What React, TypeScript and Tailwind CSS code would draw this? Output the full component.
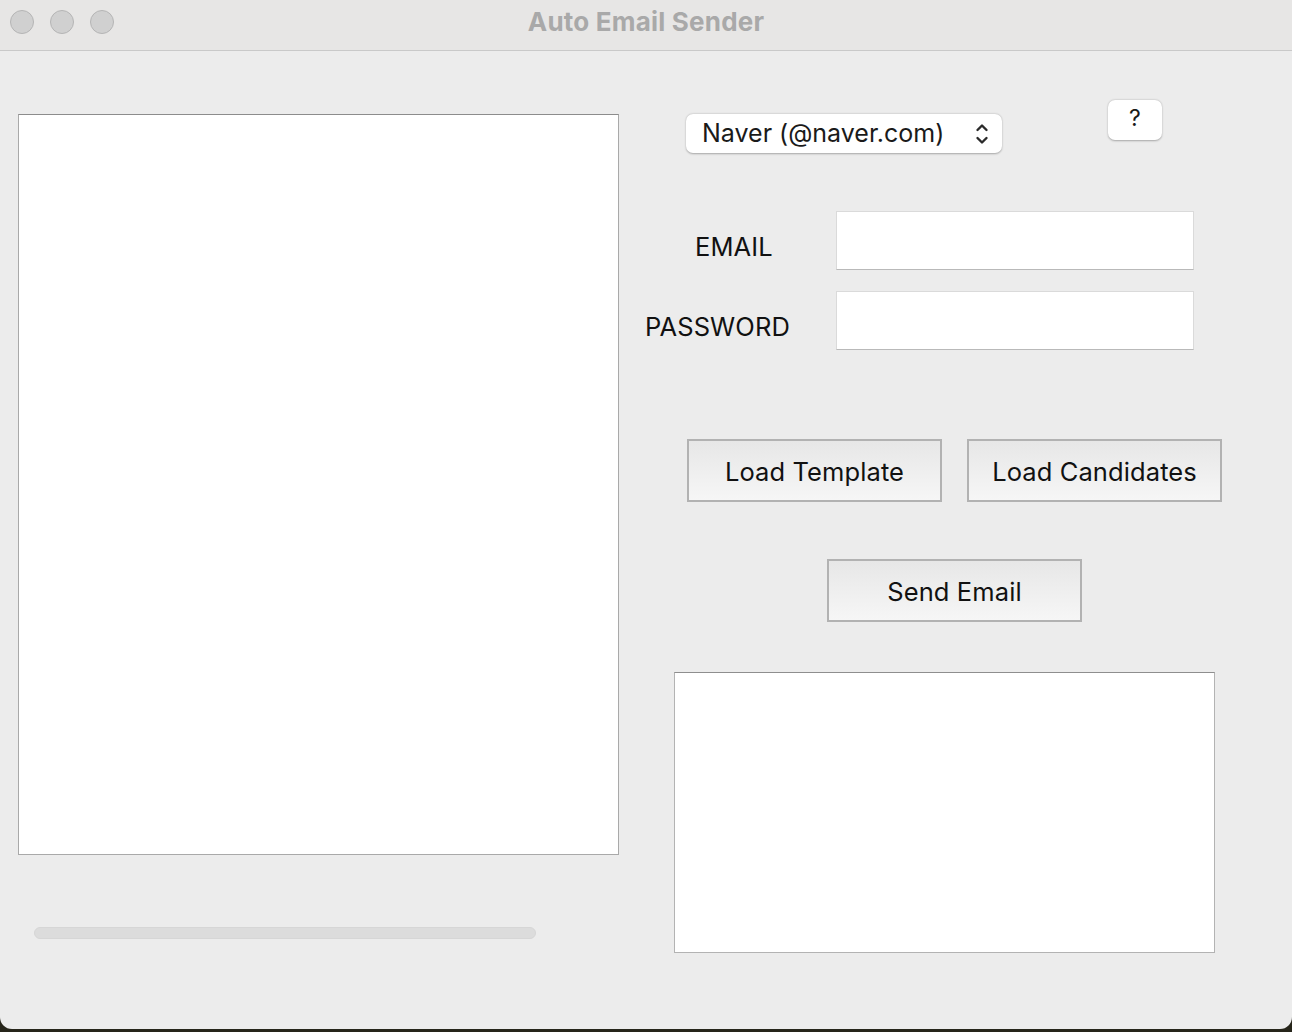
import React from "react";

function Chevrons() {
  return (
    <svg width="14" height="26" viewBox="0 0 14 26" fill="none" stroke="#2a2a2a" strokeWidth="2.4" strokeLinecap="round" strokeLinejoin="round">
      <path d="M2.5 9 L7 4.5 L11.5 9" />
      <path d="M2.5 17 L7 21.5 L11.5 17" />
    </svg>
  );
}

function Btn({ label }: { label: string }) {
  return (
    <div className="w-[255px] h-[63px] border-2 border-[#b2b2b2] bg-gradient-to-b from-[#e7e7e7] to-[#f6f6f6] flex items-center justify-center pt-[3px] text-[25.5px] tracking-[0.1px] text-[#111]">
      {label}
    </div>
  );
}

export default function App() {
  return (
    <div className="w-[1292px] h-[1032px] bg-[#26251a] overflow-hidden" style={{ fontFamily: "Inter, 'Liberation Sans', sans-serif" }}>
      <div className="w-[1292px] h-[1029px] bg-[#ececec] rounded-b-[12px] overflow-hidden flex flex-col">
        {/* Title bar */}
        <div className="h-[51px] shrink-0 bg-[#e7e6e5] border-b border-[#c9c9c9] flex items-center relative">
          <div className="flex gap-[16px] pl-[10px] -mt-[7px]">
            <div className="w-[24px] h-[24px] rounded-full bg-[#d0d0d0] border border-[#b5b5b5]" />
            <div className="w-[24px] h-[24px] rounded-full bg-[#d0d0d0] border border-[#b5b5b5]" />
            <div className="w-[24px] h-[24px] rounded-full bg-[#d0d0d0] border border-[#b5b5b5]" />
          </div>
          <div className="absolute left-0 right-0 top-0 h-[42px] flex items-center justify-center text-[26px] font-bold text-[#a9a9a9] tracking-[0.2px]">
            Auto Email Sender
          </div>
        </div>

        {/* Content */}
        <div className="flex flex-1">
          {/* Left column */}
          <div className="pl-[18px] pt-[63px] flex flex-col">
            <div className="w-[601px] h-[741px] bg-white border border-[#a9a9a9] border-t-[#8c8c8c]" />
            <div className="ml-[16px] mt-[72px] w-[502px] h-[12px] rounded-full bg-[#dcdcdc] border border-[#d6d6d6]" />
          </div>

          {/* Right column */}
          <div className="ml-[26px] pt-[49px] flex flex-col">
            <div className="flex items-start">
              <div className="ml-[41px] mt-[14px] w-[316px] h-[39px] bg-white rounded-[7px] shadow-[0_0.5px_2px_rgba(0,0,0,0.3)] flex items-center justify-between pl-[16px] pr-[13px] text-[25px] text-[#1a1a1a]">
                <span className="pt-[1px]">Naver (@naver.com)</span>
                <Chevrons />
              </div>
              <div className="ml-[106px] w-[54px] h-[40px] bg-white rounded-[7px] shadow-[0_0.5px_2px_rgba(0,0,0,0.3)] flex items-center justify-center text-[23px] text-[#1a1a1a] pb-[3px]">
                ?
              </div>
            </div>

            <div className="mt-[58px] flex items-center">
              <div className="w-[191px] pt-[14px] text-[25.5px] tracking-[0.1px] text-[#111]">
                <span className="ml-[50px]">EMAIL</span>
              </div>
              <div className="w-[358px] h-[59px] bg-white border border-[#dadada] border-b-[#b9b9b9]" />
            </div>

            <div className="mt-[21px] flex items-center">
              <div className="w-[191px] pt-[14px] text-[25.5px] tracking-[0.1px] text-[#111]">PASSWORD</div>
              <div className="w-[358px] h-[59px] bg-white border border-[#dadada] border-b-[#b9b9b9]" />
            </div>

            <div className="mt-[89px] ml-[42px] flex gap-[25px]">
              <Btn label="Load Template" />
              <Btn label="Load Candidates" />
            </div>

            <div className="mt-[57px] ml-[182px]">
              <Btn label="Send Email" />
            </div>

            <div className="mt-[50px] ml-[29px] w-[541px] h-[281px] bg-white border border-[#b3b3b3] border-t-[#8e8e8e]" />
          </div>
        </div>
      </div>
    </div>
  );
}
